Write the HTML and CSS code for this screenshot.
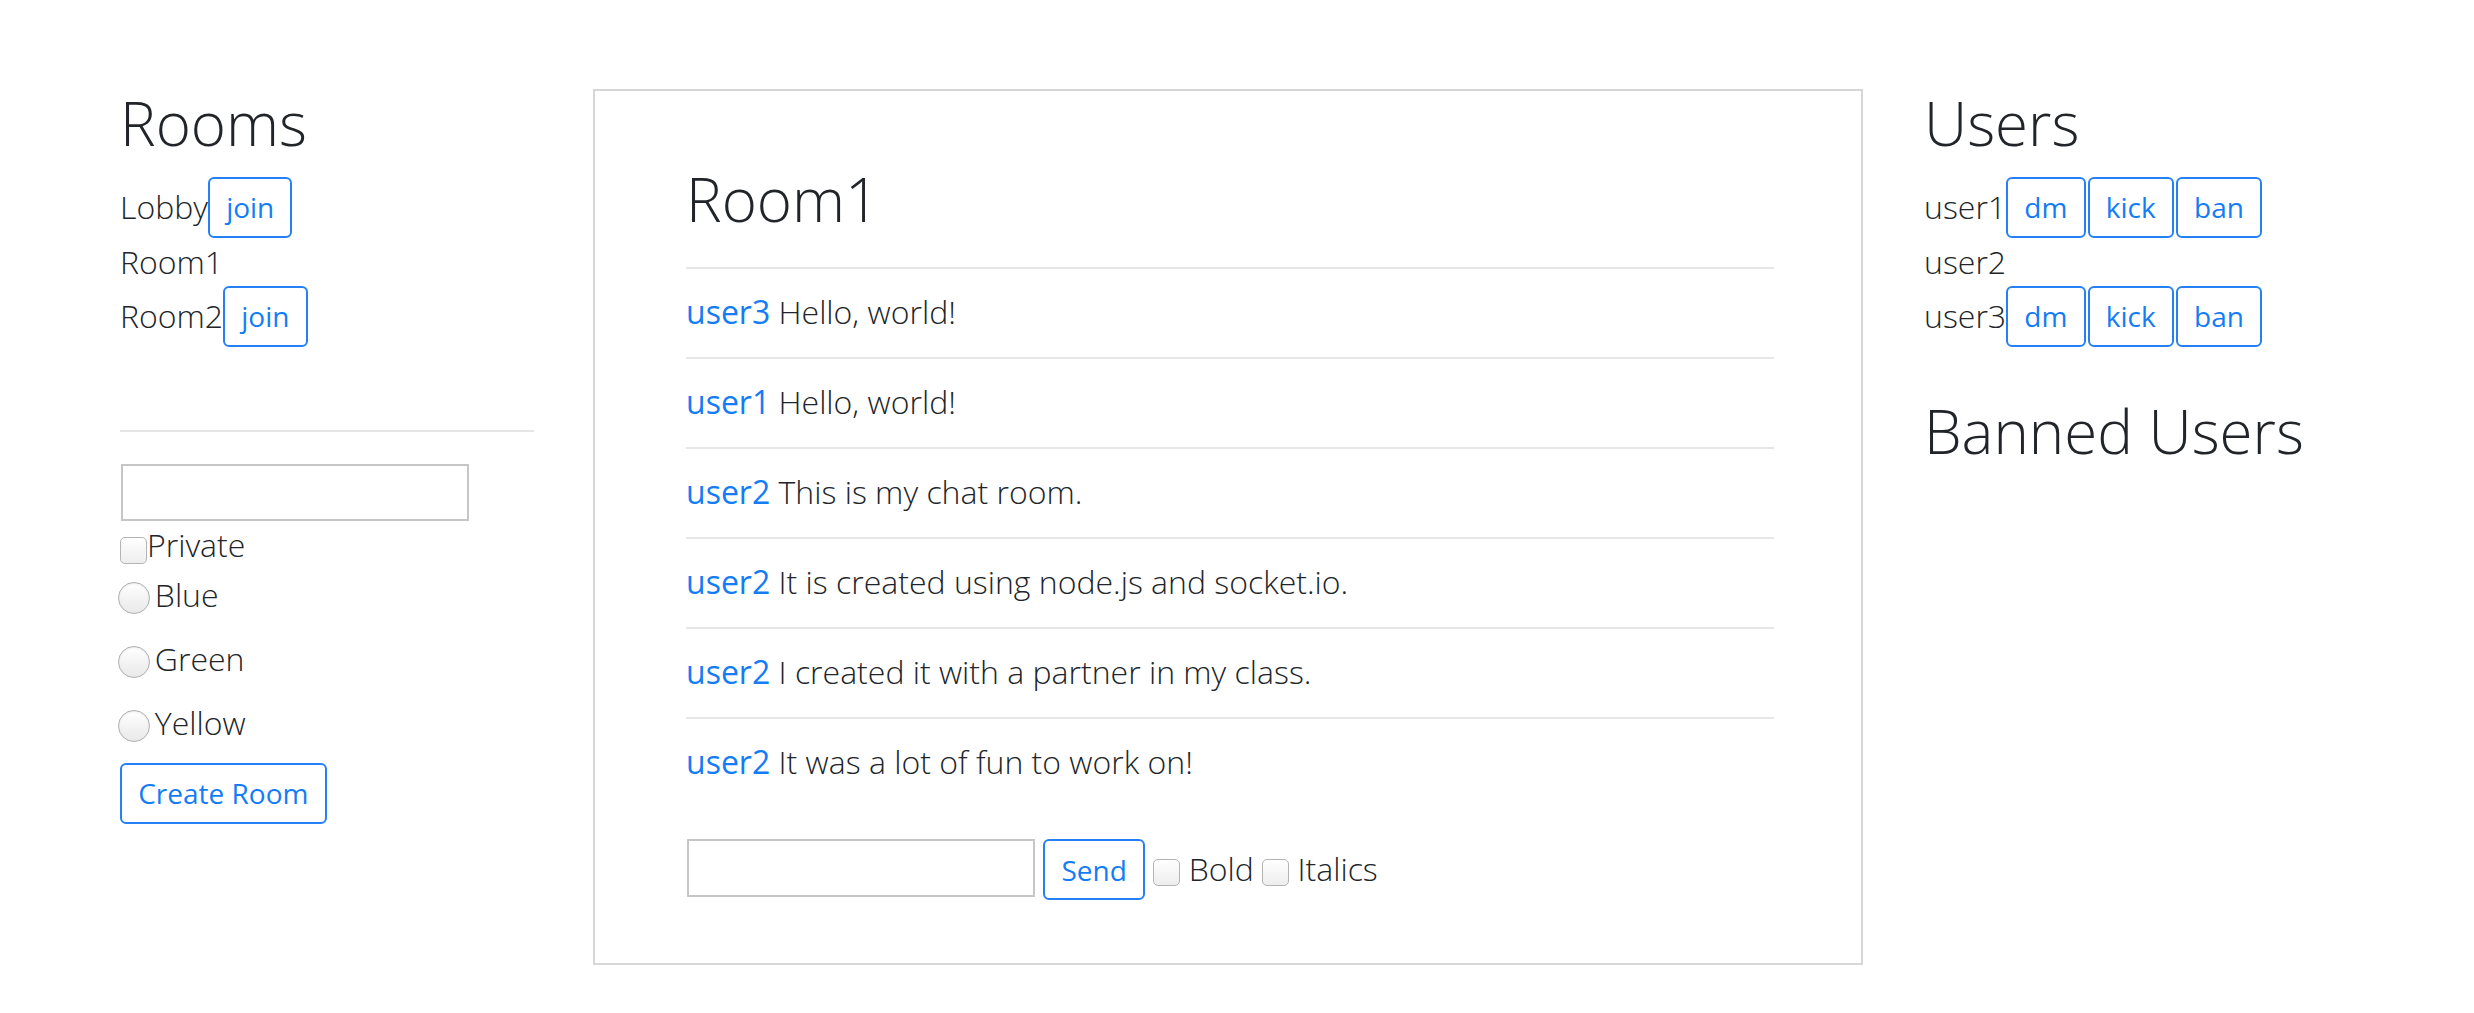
FILE: index.html
```html
<!DOCTYPE html>
<html lang="en">
<head>
<meta charset="utf-8">
<title>Chat</title>
<link rel="stylesheet" href="styles.css">
</head>
<body>
<div class="page">
  <aside class="side rooms">
    <h1 class="title">Rooms</h1>
    <ul class="list">
      <li class="item">Lobby<button class="btn" type="button">join</button></li>
      <li class="item">Room1</li>
      <li class="item">Room2<button class="btn" type="button">join</button></li>
    </ul>
    <hr class="divider">
    <form class="create">
      <input class="field" type="text">
      <label class="check-row"><span class="box"></span>Private</label>
      <label class="radio-row"><span class="radio"></span>Blue</label>
      <label class="radio-row"><span class="radio"></span>Green</label>
      <label class="radio-row"><span class="radio"></span>Yellow</label>
      <button class="btn" type="button">Create Room</button>
    </form>
  </aside>

  <main class="chat">
    <h1 class="title chat-title">Room1</h1>
    <ul class="messages">
      <li class="msg"><span class="author">user3</span> Hello, world!</li>
      <li class="msg"><span class="author">user1</span> Hello, world!</li>
      <li class="msg"><span class="author">user2</span> This is my chat room.</li>
      <li class="msg"><span class="author">user2</span> It is created using node.js and socket.io.</li>
      <li class="msg"><span class="author">user2</span> I created it with a partner in my class.</li>
      <li class="msg"><span class="author">user2</span> It was a lot of fun to work on!</li>
    </ul>
    <form class="compose">
      <input class="field" type="text"> <button class="btn" type="button">Send</button> <span class="box"></span> <span class="opt">Bold</span> <span class="box"></span> <span class="opt">Italics</span>
    </form>
  </main>

  <aside class="side users">
    <h1 class="title">Users</h1>
    <ul class="list">
      <li class="item">user1<span class="actions"><button class="btn" type="button">dm</button><button class="btn" type="button">kick</button><button class="btn" type="button">ban</button></span></li>
      <li class="item">user2</li>
      <li class="item">user3<span class="actions"><button class="btn" type="button">dm</button><button class="btn" type="button">kick</button><button class="btn" type="button">ban</button></span></li>
    </ul>
    <h1 class="title banned">Banned Users</h1>
  </aside>
</div>
</body>
</html>
```

FILE: styles.css
```css
html, body {
  margin: 0;
  padding: 0;
  background: #ffffff;
}

body {
  font-family: "Open Sans", "Liberation Sans", sans-serif;
  font-weight: 300;
  color: #212529;
}

.page {
  display: flex;
  align-items: flex-start;
  padding: 87px 0 0 120px;
}

.side {
  flex: none;
  width: 414px;
}

.title {
  margin: 0 0 17.7px;
  font-size: 60px;
  font-weight: 300;
  line-height: 72px;
}

.list {
  list-style: none;
  margin: 0;
  padding: 0;
}

.item {
  font-size: 32px;
  line-height: 48px;
  white-space: nowrap;
}

.btn {
  display: inline-block;
  margin: 0;
  padding: 7.5px 16.2px;
  font-family: "Open Sans", "Liberation Sans", sans-serif;
  font-weight: 400;
  font-size: 28px;
  line-height: 42px;
  color: #147df6;
  background: #ffffff;
  border: 2px solid #2580f5;
  border-radius: 6px;
  vertical-align: baseline;
  cursor: pointer;
}

.actions {
  display: inline-flex;
  gap: 2px;
  vertical-align: baseline;
}

.divider {
  margin: 83px 0 0;
  border: 0;
  border-top: 2px solid #e6e6e6;
  height: 0;
}

.create {
  margin-top: 32.3px;
  font-size: 32px;
  line-height: 48px;
}

.field {
  display: block;
  box-sizing: border-box;
  width: 348px;
  height: 57.4px;
  margin: 0 0 0 1px;
  padding: 2px 6px;
  border: 2px solid #c6c6c6;
  border-radius: 0;
  background: #ffffff;
  font-family: "Open Sans", "Liberation Sans", sans-serif;
  font-size: 21px;
}

.check-row,
.radio-row {
  display: block;
  white-space: nowrap;
}

.radio-row {
  margin-top: 1.3px;
  margin-bottom: 16px;
}

.radio-row + .radio-row {
  margin-top: 0;
}

.box {
  display: inline-block;
  box-sizing: border-box;
  width: 27px;
  height: 27px;
  border: 1.5px solid #b4b4b4;
  border-radius: 5px;
  background: linear-gradient(#ffffff, #ededed);
  vertical-align: -7px;
}

.radio {
  display: inline-block;
  box-sizing: border-box;
  width: 32px;
  height: 32px;
  margin: 0 4.5px 0 -1.7px;
  border: 1.5px solid #b0b0b0;
  border-radius: 50%;
  background: linear-gradient(#ffffff, #e9e9e9);
  box-shadow: inset 0 1px 2px rgba(0, 0, 0, 0.08);
  vertical-align: -7.5px;
}

.chat {
  flex: none;
  box-sizing: border-box;
  width: 1270px;
  margin: 2px 61px 0 59px;
  padding: 72.4px 87px 63px 91px;
  border: 2px solid #d6d6d6;
}

.chat-title {
  margin-bottom: 31.6px;
}

.messages {
  list-style: none;
  margin: 0;
  padding: 0;
}

.msg {
  border-top: 2px solid #e6e6e6;
  padding: 19px 0 21px;
  font-size: 32px;
  line-height: 48px;
}

.author {
  font-weight: 400;
  color: #147df6;
}

.compose {
  margin-top: 32.3px;
  font-size: 32px;
  line-height: 48px;
  white-space: nowrap;
}

.compose .field {
  display: inline-block;
  vertical-align: top;
  margin: 0 0 0 1px;
}

.compose .box {
  vertical-align: -5.5px;
}

.banned {
  margin-top: 48.5px;
}
```
